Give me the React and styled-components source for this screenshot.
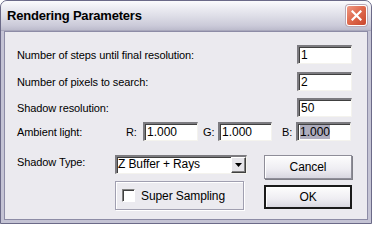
import React from 'react';
import styled, { createGlobalStyle } from 'styled-components';

const Global = createGlobalStyle`
    html, body { margin: 0; padding: 0; background: #fff; }
    body { font-family: "Liberation Sans", Arial, sans-serif; }
`;

const Window = styled.div`
    width: 372px;
    height: 224px;
    box-sizing: border-box;
    display: flex;
    flex-direction: column;
    background: #c4c3d4;
    border: 1px solid #6b6a88;
    border-radius: 7px 7px 0 0;
    overflow: hidden;
`;

const TitleBar = styled.div`
    height: 29px;
    flex: none;
    display: flex;
    align-items: center;
    justify-content: space-between;
    padding: 0 4px 0 6px;
    background: linear-gradient(#fbfbfd 0%, #ececf2 25%, #dcdce6 55%, #cbcad9 85%, #bcbbcc 100%);
    border-bottom: 1px solid #a9a8bc;
`;

const Title = styled.span`
    font-weight: bold;
    font-size: 13px;
    color: #000;
    letter-spacing: -0.2px;
`;

const CloseButton = styled.div`
    width: 21px;
    height: 21px;
    box-sizing: border-box;
    border: 1px solid #fff;
    border-radius: 3px;
    background: linear-gradient(135deg, #ef9a84 0%, #e06c50 45%, #c9462c 100%);
    box-shadow: 0 0 0 1px #b8a9b6;
    display: flex;
    align-items: center;
    justify-content: center;
`;

const Client = styled.div`
    flex: 1;
    margin: 0 3px 3px;
    border: 1px solid #8d8ca6;
    background: #ebeaef;
    padding: 13px 15px 0 12px;
    display: flex;
    flex-direction: column;
    font-size: 11px;
    letter-spacing: -0.1px;
    color: #000;
`;

const Row = styled.div`
    display: flex;
    align-items: center;
    justify-content: space-between;
    height: 19px;
    margin-bottom: ${p => p.$gap || 0}px;
`;

const Label = styled.span`
    white-space: nowrap;
    width: ${p => (p.$w ? `${p.$w}px` : 'auto')};
    flex: none;
    padding-top: ${p => p.$pt || 0}px;
`;

const Field = styled.div`
    width: ${p => p.$w || 55}px;
    height: 19px;
    box-sizing: border-box;
    flex: none;
    background: #fff;
    border-style: solid;
    border-width: 2px 1px 1px 2px;
    border-color: #7c7b80 #f4f3ee #f4f3ee #7c7b80;
    box-shadow: inset 1px 1px 0 #404040;
    padding: 1px 0 0 2px;
    font-size: 12px;
    letter-spacing: 0;
    line-height: 14px;
    white-space: nowrap;
`;

const Selected = styled.span`
    background: #aeadbe;
`;

const AmbientRow = styled.div`
    display: flex;
    align-items: center;
    height: 19px;
    margin-bottom: 14px;
`;

const Channel = styled.div`
    display: flex;
    align-items: center;
    margin-left: ${p => p.$ml || 0}px;
`;

const Lower = styled.div`
    display: grid;
    grid-template-columns: 98px 132px 1fr;
`;

const Right = styled.div`
    display: flex;
    flex-direction: column;
    gap: 7px;
`;

const Buttons = styled.div`
    display: flex;
    flex-direction: column;
    align-items: flex-end;
    gap: 6px;
`;

const Select = styled.div`
    height: 19px;
    box-sizing: border-box;
    display: flex;
    align-items: stretch;
    background: #fff;
    border-style: solid;
    border-width: 2px 1px 1px 2px;
    border-color: #7c7b80 #f4f3ee #f4f3ee #7c7b80;
    box-shadow: inset 1px 1px 0 #404040;
`;

const SelectText = styled.span`
    flex: 1;
    padding-left: 1px;
    font-size: 12px;
    line-height: 15px;
`;

const Arrow = styled.div`
    width: 15px;
    box-sizing: border-box;
    background: #e6e5ea;
    border-style: solid;
    border-width: 1px;
    border-color: #fff #404040 #404040 #fff;
    box-shadow: inset -1px -1px 0 #808080;
    display: flex;
    align-items: center;
    justify-content: center;
`;

const Group = styled.div`
    width: 129px;
    height: 29px;
    box-sizing: border-box;
    border: 1px solid #a09fb0;
    box-shadow: inset 1px 1px 0 #fff, 1px 1px 0 #fff;
    display: flex;
    align-items: center;
    padding-left: 6px;
    gap: 6px;
    font-size: 12px;
`;

const Check = styled.div`
    width: 13px;
    height: 13px;
    box-sizing: border-box;
    background: #fff;
    border-style: solid;
    border-width: 1px;
    border-color: #808080 #fff #fff #808080;
    box-shadow: inset 1px 1px 0 #404040;
`;

const Button = styled.div`
    width: 88px;
    height: 24px;
    box-sizing: border-box;
    display: flex;
    align-items: center;
    justify-content: center;
    font-size: 12px;
    background: linear-gradient(#fdfdfd, #eeedf2 60%, #d8d7e0);
    border: ${p => (p.$default ? '2px solid #1a1a1a' : '1px solid #8e8d98')};
    box-shadow: ${p => (p.$default ? 'inset 1px 1px 0 #fff' : 'inset 1px 1px 0 #fff, 1px 1px 0 #808088')};
`;

export default function App() {
    return <>
        <Global />
        <Window>
            <TitleBar>
                <Title>Rendering Parameters</Title>
                <CloseButton>
                    <svg width="11" height="11" viewBox="0 0 11 11">
                        <path d="M1.5 1.5 L9.5 9.5 M9.5 1.5 L1.5 9.5" stroke="#fff" strokeWidth="2.2" strokeLinecap="square" />
                    </svg>
                </CloseButton>
            </TitleBar>
            <Client>
                <Row $gap={8}>
                    <Label>Number of steps until final resolution:</Label>
                    <Field>1</Field>
                </Row>
                <Row $gap={7}>
                    <Label>Number of pixels to search:</Label>
                    <Field>2</Field>
                </Row>
                <Row $gap={5}>
                    <Label>Shadow resolution:</Label>
                    <Field>50</Field>
                </Row>
                <AmbientRow>
                    <Label $w={109}>Ambient light:</Label>
                    <Channel>
                        <Label $w={17}>R:</Label>
                        <Field>1.000</Field>
                    </Channel>
                    <Channel $ml={5}>
                        <Label $w={15}>G:</Label>
                        <Field $w={54}>1.000</Field>
                    </Channel>
                    <Channel $ml={10}>
                        <Label $w={14}>B:</Label>
                        <Field><Selected>1.000</Selected></Field>
                    </Channel>
                </AmbientRow>
                <Lower>
                    <Label $pt={1}>Shadow Type:</Label>
                    <Right>
                        <Select>
                            <SelectText>Z Buffer + Rays</SelectText>
                            <Arrow>
                                <svg width="7" height="4" viewBox="0 0 7 4">
                                    <path d="M0 0 H7 L3.5 4 Z" fill="#000" />
                                </svg>
                            </Arrow>
                        </Select>
                        <Group>
                            <Check />
                            <span>Super Sampling</span>
                        </Group>
                    </Right>
                    <Buttons>
                        <Button>Cancel</Button>
                        <Button $default>OK</Button>
                    </Buttons>
                </Lower>
            </Client>
        </Window>
    </>;
}
